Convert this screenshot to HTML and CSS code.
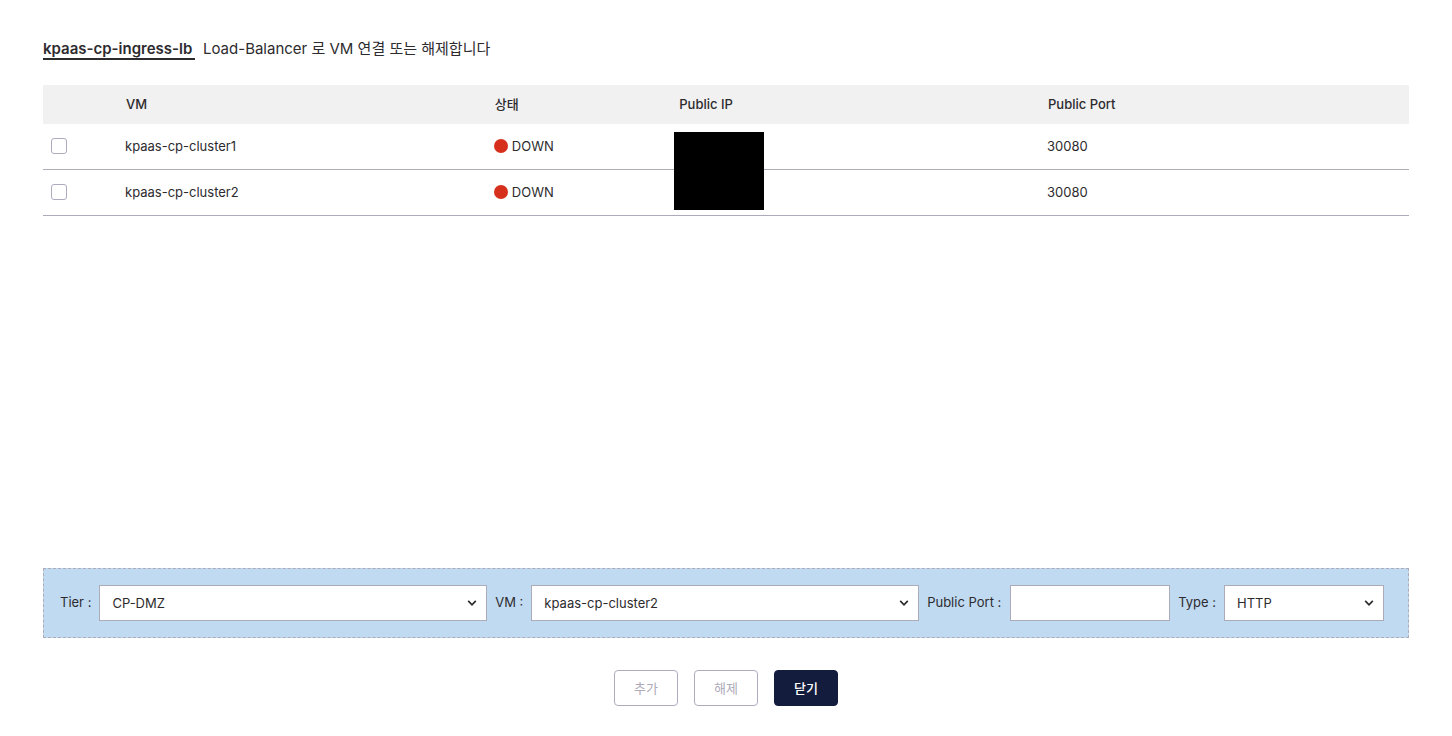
FILE: index.html
```html
<!DOCTYPE html>
<html lang="ko">
<head>
<meta charset="utf-8">
<meta name="viewport" content="width=device-width, initial-scale=1">
<title>Load-Balancer VM</title>
<link rel="stylesheet" href="styles.css">
</head>
<body>
<main class="dialog">
  <h1 class="title"><strong class="title-name">kpaas-cp-ingress-lb</strong><span>Load-Balancer 로 VM 연결 또는 해제합니다</span></h1>

  <div class="list">
    <table class="table">
      <colgroup>
        <col class="col-check">
        <col class="col-vm">
        <col class="col-status">
        <col class="col-ip">
        <col class="col-port">
      </colgroup>
      <thead>
        <tr>
          <th scope="col"></th>
          <th scope="col">VM</th>
          <th scope="col">상태</th>
          <th scope="col">Public IP</th>
          <th scope="col">Public Port</th>
        </tr>
      </thead>
      <tbody>
        <tr>
          <td><input class="check" type="checkbox" aria-labelledby="vm-1"></td>
          <td id="vm-1">kpaas-cp-cluster1</td>
          <td><span class="status"><span class="dot"></span>DOWN</span></td>
          <td class="masked"><span class="mask"></span></td>
          <td>30080</td>
        </tr>
        <tr>
          <td><input class="check" type="checkbox" aria-labelledby="vm-2"></td>
          <td id="vm-2">kpaas-cp-cluster2</td>
          <td><span class="status"><span class="dot"></span>DOWN</span></td>
          <td></td>
          <td>30080</td>
        </tr>
      </tbody>
    </table>
  </div>

  <form class="form">
    <label class="label" for="tier">Tier :</label>
    <div class="field field-wide">
      <select class="control" id="tier"><option>CP-DMZ</option></select>
      <svg class="chevron" viewBox="0 0 10 8" aria-hidden="true"><path d="M1.2 1.8 5 5.8 8.8 1.8"/></svg>
    </div>
    <label class="label" for="vm">VM :</label>
    <div class="field field-wide">
      <select class="control" id="vm"><option>kpaas-cp-cluster2</option></select>
      <svg class="chevron" viewBox="0 0 10 8" aria-hidden="true"><path d="M1.2 1.8 5 5.8 8.8 1.8"/></svg>
    </div>
    <label class="label label-port" for="port">Public Port :</label>
    <div class="field">
      <input class="control" id="port" type="text">
    </div>
    <label class="label" for="type">Type :</label>
    <div class="field">
      <select class="control" id="type"><option>HTTP</option></select>
      <svg class="chevron" viewBox="0 0 10 8" aria-hidden="true"><path d="M1.2 1.8 5 5.8 8.8 1.8"/></svg>
    </div>
  </form>

  <div class="actions">
    <button class="button" type="button" disabled>추가</button>
    <button class="button" type="button" disabled>해제</button>
    <button class="button button-primary" type="button">닫기</button>
  </div>
</main>
</body>
</html>
```
FILE: styles.css
```css
*,
*::before,
*::after {
  box-sizing: border-box;
}

body {
  margin: 0;
  background: #fff;
  color: #2d2b2e;
  font-family: Inter, "Noto Sans CJK KR", sans-serif;
  font-size: 13px;
  line-height: 20px;
}

.dialog {
  display: flex;
  flex-direction: column;
  min-height: 100vh;
  padding: 36px 43px 30px;
}

.title {
  display: flex;
  align-items: flex-start;
  gap: 8px;
  margin: 0 0 23px;
  font-size: 15px;
  font-weight: 400;
  line-height: 26px;
}

.title-name {
  min-width: 152px;
  border-bottom: 2px solid #2d2b2e;
  height: 24px;
  font-weight: 600;
}

.list {
  flex: 1;
}

.table {
  width: 100%;
  table-layout: fixed;
  border-collapse: separate;
  border-spacing: 0;
}

.col-check {
  width: 74px;
}

.col-vm,
.col-ip {
  width: 27%;
}

.col-status {
  width: 13.5%;
}

.table th {
  height: 39px;
  padding: 0 8px 2px 9px;
  background: #f1f1f1;
  font-weight: 500;
  text-align: left;
}

.table td {
  height: 46px;
  padding: 0 8px 1px;
  border-bottom: 1px solid #aeabb9;
}

.check {
  display: block;
  width: 16px;
  height: 16px;
  margin: 0;
  appearance: none;
  border: 1px solid #aeabc0;
  border-radius: 3px;
  background: #fff;
}

.check:checked {
  background: #141c3d;
}

.status {
  display: flex;
  align-items: center;
  gap: 4px;
}

.dot {
  width: 14px;
  height: 14px;
  border-radius: 50%;
  background: #d6301d;
}

.masked {
  position: relative;
}

.mask {
  position: absolute;
  top: 8px;
  left: 4px;
  z-index: 1;
  width: 90px;
  height: 78px;
  background: #000;
}

.form {
  display: flex;
  align-items: center;
  gap: 8px;
  padding: 16px 24px 16px 16px;
  border: 1px dashed #aeabb9;
  background: #c0daf1;
}

.label {
  padding-bottom: 2px;
  white-space: nowrap;
}

.label-port {
  min-width: 75px;
}

.field {
  position: relative;
  width: 160px;
}

.field-wide {
  flex: 1;
}

.control {
  display: block;
  width: 100%;
  height: 36px;
  padding: 0 12px;
  appearance: none;
  border: 1px solid #aeabb9;
  border-radius: 0;
  background: #fff;
  color: inherit;
  font: inherit;
}

.chevron {
  position: absolute;
  top: 14px;
  right: 10px;
  width: 10px;
  height: 8px;
  fill: none;
  stroke: #2d2b2e;
  stroke-width: 1.7;
  pointer-events: none;
}

.actions {
  display: flex;
  justify-content: center;
  gap: 16px;
  margin-top: 32px;
}

.button {
  width: 64px;
  height: 36px;
  padding: 0;
  border: 1px solid #aeabc0;
  border-radius: 4px;
  background: #fff;
  color: #aeabb9;
  font: inherit;
}

.button-primary {
  border-color: #141c3d;
  background: #141c3d;
  color: #fff;
  font-weight: 500;
}
```
